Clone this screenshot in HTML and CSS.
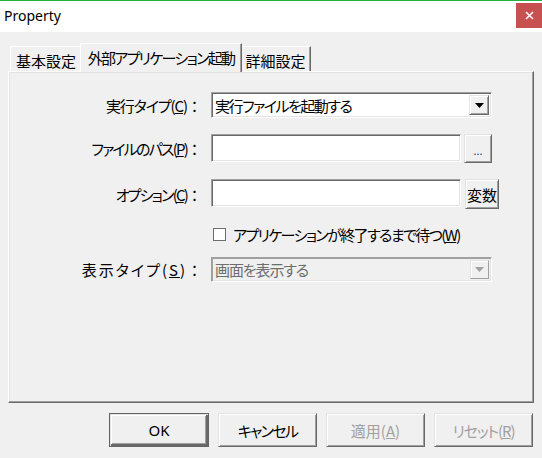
FILE: index.html
```html
<!DOCTYPE html>
<html lang="ja">
<head>
<meta charset="utf-8">
<title>Property</title>
<link rel="stylesheet" href="styles.css">
</head>
<body>
<div class="window">
  <div class="titlebar">
    <span class="title">Property</span>
    <button class="close" aria-label="閉じる">
      <svg width="9" height="9" viewBox="0 0 9 9"><path d="M1 1 L8 8 M8 1 L1 8" stroke="#fff" stroke-width="1.6" fill="none"/></svg>
    </button>
  </div>
  <div class="body">
    <div class="tabs">
      <div class="tab tab-1">基本設定</div>
      <div class="tab tab-active"><span class="ls-17">外部アプリケーション起動</span></div>
      <div class="tab tab-3">詳細設定</div>
    </div>
    <div class="panel">
      <div class="row row-type">
        <label class="label"><span class="ls-11">実行タイプ(<u>C</u>)</span><span class="colon">：</span></label>
        <div class="combo">
          <span class="combo-text ls-15">実行ファイルを起動する</span>
          <span class="drop">
            <svg width="9" height="5" viewBox="0 0 9 5"><path d="M0 0 H9 L4.5 5 Z" fill="#000"/></svg>
          </span>
        </div>
      </div>
      <div class="row row-path">
        <label class="label"><span class="ls-18">ファイルのパス(<u>P</u>)</span><span class="colon">：</span></label>
        <div class="edit"></div>
        <button class="btn-small btn-dots">...</button>
      </div>
      <div class="row row-opt">
        <label class="label"><span class="ls-18">オプション(<u>C</u>)</span><span class="colon">：</span></label>
        <div class="edit"></div>
        <button class="btn-small btn-var">変数</button>
      </div>
      <div class="row row-check">
        <span class="label"></span>
        <span class="checkbox"></span>
        <span class="check-text ls-16">アプリケーションが終了するまで待つ(<u>W</u>)</span>
      </div>
      <div class="row row-disp">
        <label class="label"><span class="ls-wide">表示タイプ(<u>S</u>)</span><span class="colon">：</span></label>
        <div class="combo combo-disabled">
          <span class="combo-text ls-11">画面を表示する</span>
          <span class="drop">
            <svg width="9" height="5" viewBox="0 0 9 5"><path d="M0 0 H9 L4.5 5 Z" fill="#a0a0a0"/></svg>
          </span>
        </div>
      </div>
    </div>
    <div class="buttons">
      <button class="btn btn-default"><span class="latin">OK</span></button>
      <button class="btn"><span class="ls-17">キャンセル</span></button>
      <button class="btn btn-disabled">適用(<u>A</u>)</button>
      <button class="btn btn-disabled"><span class="ls-11">リセット(<u>R</u>)</span></button>
    </div>
  </div>
</div>
</body>
</html>
```

FILE: styles.css
```css
* { box-sizing: border-box; }
html, body { margin: 0; padding: 0; }
body {
  width: 542px;
  height: 458px;
  overflow: hidden;
  background: #f0f0f0;
  font-family: "Noto Sans CJK JP", "Noto Sans", sans-serif;
  font-feature-settings: "palt";
  font-size: 15px;
  color: #000;
}
.window { width: 542px; height: 458px; }

/* kana-heavy text is narrower in the original UI font */
.ls-11 { letter-spacing: -1.1px; }
.ls-15 { letter-spacing: -1.5px; }
.ls-16 { letter-spacing: -1.6px; }
.ls-17 { letter-spacing: -1.7px; }
.ls-18 { letter-spacing: -1.8px; }
.ls-wide { letter-spacing: 2px; }
.latin { font-family: "Noto Sans", sans-serif; }

.titlebar {
  height: 32px;
  border-top: 1px solid #1fb141;
  background: #fff;
  display: flex;
  justify-content: space-between;
  align-items: flex-start;
}
.title {
  font-family: "Noto Sans", sans-serif;
  font-size: 14px;
  line-height: 30px;
  padding-left: 4px;
  color: #000;
}
.close {
  margin-top: 2px;
  width: 26px;
  height: 25px;
  border: 0;
  padding: 0;
  background: #c75050;
  display: flex;
  align-items: center;
  justify-content: center;
}
.body { padding-top: 11px; }
.tabs {
  display: flex;
  align-items: flex-end;
  padding-left: 10px;
  height: 28px;
}
.tab {
  height: 25px;
  background: #f0f0f0;
  border-top: 1px solid #fff;
  border-left: 1px solid #fff;
  border-right: 1px solid #696969;
  box-shadow: inset -1px 0 #a0a0a0;
  display: flex;
  align-items: center;
  justify-content: center;
  line-height: 1;
  padding-top: 2px;
  white-space: nowrap;
}
.tab-1 { width: 72px; }
.tab-3 { width: 71px; }
.tab-active {
  position: relative;
  z-index: 1;
  width: 162px;
  height: 29px;
  margin: 0 -2px -1px -2px;
  padding-top: 0;
  padding-bottom: 2px;
}
.panel {
  margin: 0 8px;
  height: 332px;
  border-top: 1px solid #fff;
  border-left: 1px solid #fff;
  border-right: 1px solid #696969;
  border-bottom: 1px solid #696969;
  box-shadow: inset -1px -1px #a0a0a0, inset 1px 1px #e3e3e3;
  padding-top: 20px;
}
.row {
  display: flex;
  align-items: center;
}
.label {
  width: 193px;
  flex: none;
  margin-right: 9px;
  text-align: right;
  white-space: nowrap;
  line-height: 1;
}
.colon { font-feature-settings: normal; letter-spacing: 0; }
.row-path { margin-top: 16px; }
.row-opt { margin-top: 16px; }
.row-check { margin-top: 18px; height: 15px; }
.row-disp { margin-top: 15px; }
.combo {
  width: 281px;
  height: 26px;
  background: #fff;
  border-top: 1px solid #a0a0a0;
  border-left: 1px solid #a0a0a0;
  border-right: 1px solid #fff;
  border-bottom: 1px solid #fff;
  box-shadow: inset 1px 1px #696969, inset -1px -1px #e3e3e3;
  display: flex;
  align-items: center;
  justify-content: space-between;
  padding: 2px 2px 2px 3px;
}
.combo-text { line-height: 1; white-space: nowrap; }
.drop {
  width: 20px;
  height: 20px;
  background: #f0f0f0;
  border-top: 1px solid #e3e3e3;
  border-left: 1px solid #e3e3e3;
  border-right: 1px solid #696969;
  border-bottom: 1px solid #696969;
  box-shadow: inset 1px 1px #fff, inset -1px -1px #a0a0a0;
  display: flex;
  align-items: center;
  justify-content: center;
}
.combo-disabled {
  height: 25px;
  background: #f0f0f0;
  color: #6d6d6d;
  border-top: 1px solid #a0a0a0;
  border-left: 1px solid #a0a0a0;
  box-shadow: inset 1px 1px #a0a0a0, inset -1px -1px #e3e3e3;
}
.combo-disabled .drop {
  width: 19px;
  height: 19px;
  border-right-color: #a0a0a0;
  border-bottom-color: #a0a0a0;
  box-shadow: inset 1px 1px #fff;
}
.edit {
  width: 250px;
  height: 28px;
  background: #fff;
  border-top: 1px solid #a0a0a0;
  border-left: 1px solid #a0a0a0;
  border-right: 1px solid #fff;
  border-bottom: 1px solid #fff;
  box-shadow: inset 1px 1px #696969, inset -1px -1px #e3e3e3;
  align-self: flex-start;
}
.btn-small {
  font-family: inherit;
  font-feature-settings: "palt";
  font-size: 15px;
  background: #f0f0f0;
  border-top: 1px solid #e3e3e3;
  border-left: 1px solid #e3e3e3;
  border-right: 1px solid #696969;
  border-bottom: 1px solid #696969;
  box-shadow: inset 1px 1px #fff, inset -1px -1px #a0a0a0;
  padding: 0;
  align-self: flex-start;
  line-height: 1;
  color: #000;
}
.btn-dots {
  margin-left: 3px;
  width: 28px;
  height: 29px;
  font-size: 11px;
  font-family: "Noto Sans", sans-serif;
  color: #1a1a5a;
  padding-top: 4px;
}
.btn-var {
  margin-left: 4px;
  width: 34px;
  height: 30px;
}
.checkbox {
  width: 13px;
  height: 13px;
  margin-left: 2px;
  border: 1px solid #6e6e6e;
  background: #fff;
  flex: none;
}
.check-text {
  margin-left: 7px;
  line-height: 1;
  white-space: nowrap;
}
.buttons {
  display: flex;
  justify-content: flex-end;
  gap: 9px;
  margin-top: 10px;
  padding-right: 9px;
}
.btn {
  width: 99px;
  height: 34px;
  font-family: "Noto Sans CJK JP", "Noto Sans", sans-serif;
  font-feature-settings: "palt";
  font-size: 15px;
  background: #f0f0f0;
  color: #000;
  border-top: 1px solid #e3e3e3;
  border-left: 1px solid #e3e3e3;
  border-right: 1px solid #696969;
  border-bottom: 1px solid #696969;
  box-shadow: inset 1px 1px #fff, inset -1px -1px #a0a0a0;
  padding: 0;
  line-height: 1;
}
.btn-default {
  width: 100px;
  border: 1px solid #646464;
  box-shadow: inset 1px 1px #e3e3e3, inset -2px -2px #696969, inset 2px 2px #fff, inset -3px -3px #a0a0a0;
}
.btn-disabled { color: #a0a0a0; }
```
